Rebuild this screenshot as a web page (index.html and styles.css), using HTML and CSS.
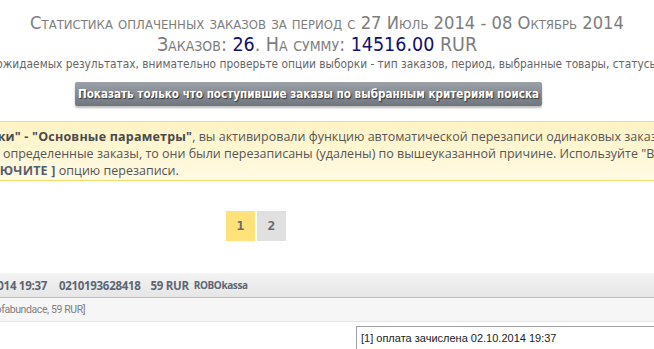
FILE: index.html
```html
<!DOCTYPE html>
<html lang="ru">
<head>
  <meta charset="UTF-8" />
  <title>Статистика заказов</title>
  <link rel="stylesheet" href="styles.css">
</head>
<body>
  <div class="page">
    <h1 class="stat-title">Статистика оплаченных заказов за период с 27 Июль 2014 - 08 Октябрь 2014</h1>
    <div class="stat-total">Заказов: <span class="num">26</span>. На сумму: <span class="num">14516.00</span> RUR</div>
    <p class="stat-hint">При неожидаемых результатах, внимательно проверьте опции выборки - тип заказов, период, выбранные товары, статусы заказов.</p>

    <div class="actions">
      <button class="show-btn" type="button">Показать только что поступившие заказы по выбранным критериям поиска</button>
    </div>

    <div class="notice">
      <div class="notice-line l1">Внимание! В разделе <b>"Настройки" - "Основные параметры"</b>, вы активировали функцию автоматической перезаписи одинаковых заказов.</div>
      <div class="notice-line l2">Если вы не видите определенные заказы, то они были перезаписаны (удалены) по вышеуказанной причине. Используйте "Все заказы" или</div>
      <div class="notice-line l3">или <b>[ ОТКЛЮЧИТЕ ]</b> опцию перезаписи.</div>
    </div>

    <div class="pager">
      <a class="pager-item current">1</a>
      <a class="pager-item">2</a>
    </div>

    <div class="order">
      <div class="order-head">
        <span class="order-date">02.10.2014 19:37</span>
        <span class="order-id">0210193628418</span>
        <span class="order-sum">59 RUR</span>
        <span class="order-pay">ROBOkassa</span>
      </div>
      <div class="order-info">[1 x Methodofabundace, 59 RUR]</div>
      <div class="order-status">
        <input class="status-field" type="text" value="[1] оплата зачислена 02.10.2014 19:37" readonly />
      </div>
    </div>
  </div>
</body>
</html>
```

FILE: styles.css
```css
html, body {
  margin: 0;
  padding: 0;
  background: #fff;
  overflow: hidden;
}

.page {
  width: 1200px;
  margin-left: -273px;
  padding-top: 12px;
}

.stat-title {
  margin: 0;
  text-align: center;
  font-family: 'DejaVu Sans Condensed', 'DejaVu Sans', sans-serif;
  font-variant: small-caps;
  font-weight: normal;
  font-size: 18.2px;
  line-height: 22px;
  color: #7d7d7d;
  white-space: nowrap;
}

.stat-total {
  padding-right: 20px;
  text-align: center;
  font-family: 'DejaVu Sans Condensed', 'DejaVu Sans', sans-serif;
  font-variant: small-caps;
  font-size: 19.5px;
  line-height: 22px;
  color: #7d7d7d;
}

.num {
  color: #101070;
}

.stat-hint {
  margin: 0;
  padding-left: 12px;
  text-align: center;
  font-family: 'Liberation Sans Narrow', 'DejaVu Sans Condensed', 'Liberation Sans', sans-serif;
  font-size: 11.8px;
  line-height: 16px;
  color: #666;
  white-space: nowrap;
}

.actions {
  text-align: center;
  margin-top: 10px;
}

.show-btn {
  margin-right: 37px;
  height: 24px;
  padding: 0 3px;
  border: none;
  border-radius: 2px;
  background: linear-gradient(#9ca1a8, #70767e);
  box-shadow: 0 2px 2px rgba(0, 0, 0, 0.25);
  color: #fff;
  font-family: 'Liberation Sans Narrow', 'DejaVu Sans Condensed', 'Liberation Sans', sans-serif;
  font-weight: bold;
  font-size: 11.6px;
  text-shadow: 1px 1px 1px #333;
}

.notice {
  margin: 15px 20px 0;
  padding: 6px 10px 1px;
  border: 1px solid #f9d968;
  background: linear-gradient(#fff3c4, #fffae4);
  font-family: 'Open Sans', sans-serif;
  font-size: 12.5px;
  line-height: 17px;
  color: #555;
}

.notice b {
  color: #4a4a4a;
  letter-spacing: 0.2px;
}

.notice-line {
  white-space: nowrap;
}

.l1 { padding-left: 44px; }
.l2 { padding-left: 129px; }
.l3 { padding-left: 172px; }

.l3 b {
  color: #56606c;
}

.pager {
  display: flex;
  gap: 2px;
  padding-left: 499px;
  margin-top: 30px;
}

.pager-item {
  width: 29px;
  height: 30px;
  line-height: 30px;
  text-align: center;
  background: #e0e0e0;
  font-family: 'DejaVu Sans Mono', monospace;
  font-weight: bold;
  font-size: 13px;
  color: #6a6a6a;
}

.pager-item.current {
  background: #ffe27a;
}

.order {
  margin: 32px 20px 0;
}

.order-head {
  display: flex;
  align-items: center;
  gap: 10px;
  height: 24px;
  padding-left: 213px;
  border-bottom: 1px solid #bdbdbd;
  background: linear-gradient(#f3f3f3, #e6e6e6);
  font-family: 'Open Sans', sans-serif;
  font-weight: bold;
  font-size: 11.5px;
  letter-spacing: -0.3px;
  color: #5d6673;
}

.order-id {
  margin-left: 2px;
}

.order-pay {
  margin-left: -5px;
  font-size: 10px;
  letter-spacing: -0.4px;
}

.order-info {
  height: 23px;
  line-height: 23px;
  padding-left: 198px;
  border-bottom: 1px solid #e6e6e6;
  background: #f6f6f6;
  font-family: Roboto, sans-serif;
  font-size: 10.5px;
  letter-spacing: -0.4px;
  color: #808080;
}

.order-status {
  padding: 4px 0 0 609px;
}

.status-field {
  width: 420px;
  height: 24px;
  box-sizing: border-box;
  padding: 0 4px;
  border: 1px solid #a0a0a0;
  font-family: 'Liberation Sans', Arial, sans-serif;
  font-size: 11px;
  color: #222;
}
```
